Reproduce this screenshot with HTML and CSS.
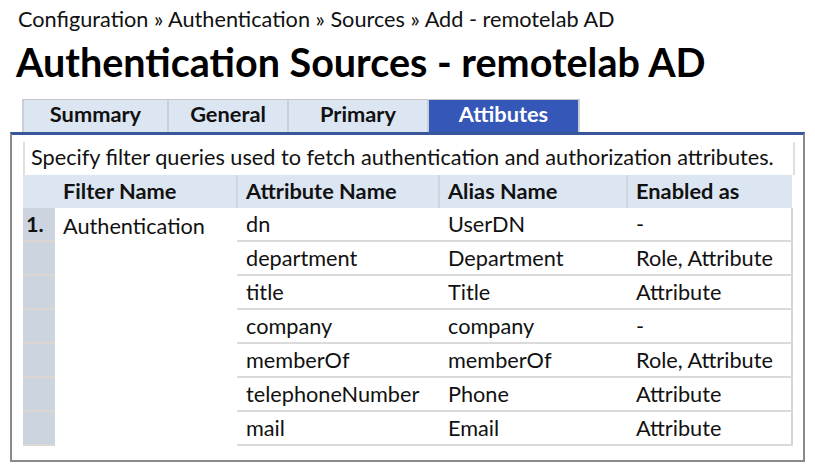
FILE: index.html
```html
<!DOCTYPE html>
<html>
<head>
<meta charset="utf-8">
<link rel="stylesheet" href="styles.css">
</head>
<body>
<div class="crumb">Configuration » Authentication » Sources » Add - remotelab AD</div>
<h1 class="title">Authentication Sources - remotelab AD</h1>
<div class="tabs">
  <div class="tab t1">Summary</div>
  <div class="tab t2">General</div>
  <div class="tab t3">Primary</div>
  <div class="tab t4 active">Attibutes</div>
</div>
<div class="panel">
  <div class="desc">Specify filter queries used to fetch authentication and authorization attributes.</div>
  <table class="grid">
    <thead>
      <tr>
        <th class="num"></th>
        <th class="c-filter">Filter Name</th>
        <th class="c-attr">Attribute Name</th>
        <th class="c-alias">Alias Name</th>
        <th class="c-en">Enabled as</th>
      </tr>
    </thead>
    <tbody>
      <tr><td class="num">1.</td><td class="filter" rowspan="7">Authentication</td><td>dn</td><td>UserDN</td><td>-</td></tr>
      <tr><td class="num"></td><td>department</td><td>Department</td><td>Role, Attribute</td></tr>
      <tr><td class="num"></td><td>title</td><td>Title</td><td>Attribute</td></tr>
      <tr><td class="num"></td><td>company</td><td>company</td><td>-</td></tr>
      <tr><td class="num"></td><td>memberOf</td><td>memberOf</td><td>Role, Attribute</td></tr>
      <tr><td class="num"></td><td>telephoneNumber</td><td>Phone</td><td>Attribute</td></tr>
      <tr><td class="num"></td><td>mail</td><td>Email</td><td>Attribute</td></tr>
    </tbody>
  </table>
</div>
</body>
</html>
```
FILE: styles.css
```css
html, body {
  margin: 0;
  padding: 0;
  background: #fff;
}
body {
  font-family: Lato, "Open Sans", sans-serif;
  color: #111;
  width: 815px;
  height: 472px;
  overflow: hidden;
}
.crumb {
  font-size: 21.7px;
  padding: 6px 0 0 18px;
  height: 26px;
  line-height: 26px;
}
.title {
  margin: 0;
  padding: 6px 0 0 16px;
  font-size: 39.5px;
  font-weight: 700;
  line-height: 48px;
  height: 48px;
  color: #000;
}
.tabs {
  display: flex;
  margin: 13px 0 0 22px;
  height: 32px;
  border-top: 1px solid #c9c9c9;
  width: 558px;
}
.tab {
  box-sizing: border-box;
  background: #dce6f2;
  border-left: 2px solid #c9cfd8;
  font-weight: 700;
  font-size: 21.8px;
  line-height: 28px;
  text-align: center;
  color: #111;
}
.t1 { width: 145px; }
.t2 { width: 120px; }
.t3 { width: 140px; }
.t4 { width: 153px; }
.tab.active {
  background: #3557b8;
  color: #fff;
  border-left: 2px solid #c9cfd8;
  border-right: 2px solid #c9cfd8;
}
.panel {
  margin-left: 10px;
  width: 795px;
  box-sizing: border-box;
  height: 330px;
  border-top: 3px solid #3a569a;
  border-left: 2px solid #8a8a8a;
  border-right: 2px solid #8a8a8a;
  border-bottom: 2px solid #8a8a8a;
  padding: 7px 0 0 11px;
}
.desc {
  width: 772px;
  box-sizing: border-box;
  height: 33px;
  font-size: 21.7px;
  line-height: 30px;
  padding-left: 6px;
  border-left: 2px solid #e0e0e0;
  border-right: 2px solid #e0e0e0;
}
.grid {
  border-collapse: collapse;
  width: 770px;
  font-size: 21.7px;
  table-layout: fixed;
}
.grid th {
  background: #dce6f2;
  height: 30px;
  text-align: left;
  font-weight: 700;
  font-size: 21.8px;
  padding: 0 0 3px 8px;
  border-left: 2px solid #d0d6de;
  color: #111;
}
.grid th.num { width: 32px; padding: 0; border-left: none; }
.grid th.c-filter { width: 173px; border-left: none; }
.grid th.c-attr { width: 192px; }
.grid th.c-alias { width: 178px; }
.grid td {
  height: 32px;
  padding: 0 0 0 9px;
  border-bottom: 2px solid #dadada;
  vertical-align: middle;
}
.grid td:last-child { border-right: 2px solid #d4d4d4; }
.grid td.num {
  background: #ccd4df;
  border-bottom: 2px solid #dbd6d2;
  padding: 0 0 0 3px;
  font-weight: 700;
}
.grid td.filter {
  vertical-align: top;
  border-bottom: none;
  padding: 5px 0 0 8px;
}
```
